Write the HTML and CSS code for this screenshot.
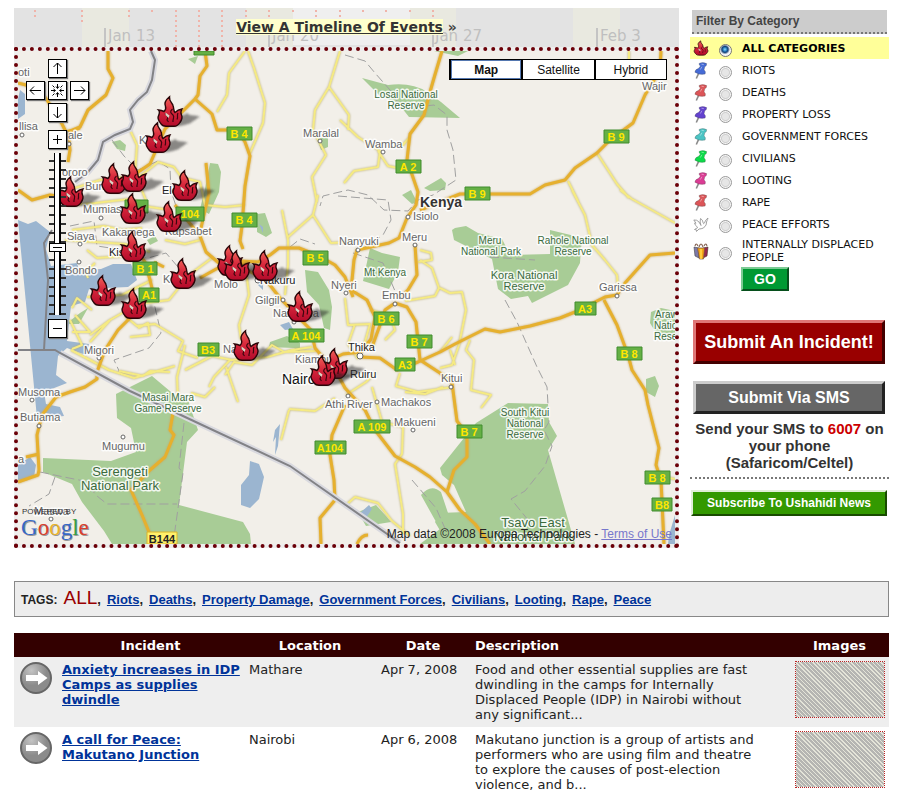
FILE: index.html
```html
<!DOCTYPE html>
<html lang="en">
<head>
<meta charset="utf-8">
<title>Ushahidi</title>
<link rel="stylesheet" href="styles.css">
</head>
<body>
<svg class="defs" aria-hidden="true">
  <defs>
    <g id="flame">
      <path d="M12.500 .8C8 4.500 7 7 8.500 10.500C9.300 12.800 8 14.500 7 15.500C5.500 14.800 4 14.300 1.500 14C3.500 16 2 18.500 1.200 20.500C.3 23 2.500 26 4.500 28.500C5.500 30 7 30.300 9 30.300H17C20 30.300 21.500 29 23 26.500C25 23.500 25.800 21.500 24.500 19C23.500 17 23.500 15.500 25 13C21.500 13.500 19.500 15 18 16.500C16.500 15 17 12.500 16 9.500C15.300 7 12 5 12.500 .8Z" fill="url(#fire)" stroke="#2a0508" stroke-width="1.400"/>
      <path d="M8 17.500C10.500 20 11.500 21 10 24L11.500 26M15.500 13C12.500 15.500 13.500 17 16 19C18 21 15.500 23 16 26M21 17C19.500 19.500 21.500 21 20 23.500" fill="none" stroke="#3c060e" stroke-width="1.200"/>
      <path d="M8.500 16.500l4 3-1 2.500-3-3Z" fill="#ddd5c5"/>
    </g>
    <linearGradient id="fire" x1="0" y1="0" x2="0" y2="1"><stop offset="0" stop-color="#ee6358"/><stop offset=".45" stop-color="#d8283c"/><stop offset="1" stop-color="#b20a2a"/></linearGradient>
    <g id="marker">
      <path d="M9 30C22 31 33 29 36 25C40 24 37 23 43 21C38 18 34 21 30 17C27 20 22 19 20 22Z" fill="#222" opacity=".5" filter="url(#soft)"/>
      <use href="#flame"/>
    </g>
    <filter id="soft"><feGaussianBlur stdDeviation="1"/></filter>
    <symbol id="pin" viewBox="0 0 16 18">
      <path d="M5.500 12L3 17.500" stroke="#8a8a8a" stroke-width="1.700"/>
      <path d="M6 1.500Q10 -.3 14 1.700Q14.200 4.300 12 5L11.200 8.500Q13.500 10 12.300 12.800Q6.500 14 1.500 10.800Q2 7.500 5.200 7L7.500 4.200Q5.700 3.300 6 1.500Z" fill="currentColor" stroke="#444" stroke-opacity=".45" stroke-width=".7"/>
      <path d="M8.500 2.300l2.500 .5M7.300 8l1.700-3" stroke="#fff" stroke-opacity=".45"/>
    </symbol>
    <symbol id="arrow" viewBox="0 0 32 32">
      <circle cx="16" cy="16" r="15" fill="url(#metal)" stroke="#666" stroke-width="2"/>
      <path d="M6 13h12V9l9.500 7-9.500 7v-4H6Z" fill="#fff"/>
    </symbol>
    <radialGradient id="metal" cx=".35" cy=".25"><stop offset="0" stop-color="#c4c4c4"/><stop offset="1" stop-color="#8b8b8b"/></radialGradient>
  </defs>
</svg>

<div class="top">
  <main class="main">
    <div class="timeline">
      <svg class="timeline-scale" viewBox="14 8 665 39" preserveAspectRatio="none" aria-hidden="true">
        <path fill="#e3e3e3" d="M14 8h665v39H14z"/>
        <path fill="#e9e9e0" d="M82 8h47v39H82zM246 8h47v39h-47zM573 8h47v39h-47z"/>
        <path fill="#efefef" d="M293 8h126v37H293z"/>
        <path fill="#e9e9e0" d="M410 8h46v39h-46z"/>
        <path fill="none" stroke="#f0b4aa" stroke-width="2" stroke-dasharray="2 3" d="M35 10v7M82 10v12M129 10v7M152 10v2M176 10v37M199 10v37M222 10v37M246 10v7M269 10v7M293 10v2M316 10v7M340 10v7M363 10v2M386 10v2M410 10v2M433 10v7"/>
        <path stroke="#c4c4c4" stroke-width="2" d="M105 28v19M269 28v19M433 28v19M597 28v19"/>
        <g class="timeline-dates"><text x="108" y="41">Jan 13</text><text x="272" y="41">Jan 20</text><text x="435" y="41">Jan 27</text><text x="600" y="41">Feb 3</text></g>
      </svg>
      <p class="timeline-title"><a href="#timeline">View A Timeline Of Events</a> »</p>
    </div>
    <div class="map">
      <svg class="map-art" viewBox="18 51 657 493" role="img" aria-label="Map of incidents in Kenya">
        <path fill="#f2efe9" d="M18 51h657v493H18z"/>
        <g fill="#a8cc96">
          <path d="M362 78L388 85Q412 82 427 92L441 102L460 118L409 117L398 103L380 96Z"/>
          <path d="M434 51h34l-10 5ZM210 163l8 1 3 8-2 20-10 22-9-5 5-20Z"/>
          <path d="M257 214l8-1 7 20-6 4-9-5ZM305 270l13 2 11 18 3 17-2 23-6-2-5-23-12-13ZM455 228l11-2 12 7 24 6 8 16 40-1 0-24 33 8-2 10-1 15-12 22-36 18-4-7-17 3-13-10-6-30-38-19-2-10Z"/>
          <path d="M370 248l12 5 18 4-2 15-9 17-26-8ZM402 195l9-5 6 12-5 2ZM424 188l17-10 5 5-1 7-15 1ZM651 312l10-4 14 3v25l-14 5-11-18ZM646 379l9-3 4 10-4 11-9-5Z"/>
          <path d="M116 394l36-18 19 16 17 8 10 30-11 12-8 63 64 17 7 12 1 10H112l-8-13-22-29-10-18-29-12v-14l68 3 25-9-5-24-14-10Z"/>
          <path d="M508 403l40 1 1 18 8 14-9 14 27 94H448l-13-22 4-9 27-1-12-27-12-10-2-7 36-45ZM421 495q10-12 20-3l11 33 15 10 13 9h-60l20-15Z"/>
          <path d="M358 512l18-7 10 11 5 6-25 4ZM80 313l8-5-9 16-13 0ZM270 342l17-6 13 7v9l-6-4-25-1ZM112 142l8-2 6 5-1 6-8-2ZM147 240l8-4 3 5-8 4ZM188 59l10-3-3 8ZM317 138l11 0 0 9-7 3Z"/>
        </g>
        <g fill="#9bb5d0">
          <path d="M18 220l10 4 8-3 14 11-4 17 5 17 26-3 2 7 22-1 12-5 18 0 6 16-9 7-22 1-8 6-9-5-4 13-14 4-4 35 22 3-3 11-19-7-9 8-2 19 11 8-23 9 2 12 14 3 4 9-9 1-9-4-9 5Z"/>
          <path d="M18 465l12-8 6 8-2 12-9 4-7-1ZM250 461l9 3 5 13-5 22-9 9-9-3v-20l8-10ZM20 90l5 4 0 20-7 5v-20ZM280 325l9-3 4 7-8 1ZM360 513l9-8 3 4-8 12ZM669 535l6-20v29h-7ZM258 285l5-2v7ZM259 224l4 3 0 6Z"/>
          <path d="M280 424l-2 22-3 9 1-18-3 5 2-12Z"/>
        </g>
        <g class="border-dash">
          <path d="M345 55l20 6 10 12 15 17 6 10 10 8 28-3 13 10 0 15 6 20 3 30-23 15-15 5-10 11-24-1-16-15-20-5-25 6-3 10"/>
          <path d="M338 196l50 4 3 20-8 15-25 17M112 140l12 16 14 14 20-9 12 8 1 22 5 15M353 253l30 10 12 28M490 257l45 3M505 300l12 22 20 45 10 20 2 35-5 8 8 16-7 20-20 25-14 8 22 27"/>
          <path d="M70 226l24-5 3 25 20 3 31 9 18-5 12 14M121 375l-7-15 35-12 12-15-7-30M184 423l-5 45 4 5-9 64M40 472l24 5 20 4 13 15 10 8h70M55 477l-6 17-20 12M412 480l24 28 11 25M290 247l10-8 15 5"/>
        </g>
        <g class="minor">
          <path d="M245 51l-16 22-2 22-10 17M248 51l6 17 11 35-2 20-13 30M340 51l-11 36-14 23-2 20 13 25-14 22 5 25M329 87l20 28-1 15M340 120l18 17 22 14-2 16-24 4-10 12M378 151l10 15 20 4M410 137l-9 10"/>
          <path d="M572 190l13 25 7 30 13 15 12 15 1 16M568 181l10 20M597 153l20 31 12 14M620 190l12 9 27 15 16 9M629 51v10"/>
          <path d="M130 130l7 15-2 28 12 30M75 188l25-8 18-2 24-3 16-13 16 5 10 14-10 12M70 205l25-2 35-4 20 8 20 3M72 230l32-4 18 4 20-2M65 240l30 2 30 2 25 8M87 250l10 8 28-2M95 263l-9 10 2 5M152 280l-30 15-35 2M92 310l-15-12-5 10M75 315l15 17-18 0M70 320l12 25-10 4"/>
          <path d="M90 335l20-15 14-8 15-8 30-4 20-25 23-17M110 320l-20 22M125 316l12 10 18-2 28 17-5 10 20 7M185 345l-8 32 1 25M175 366l-41 12-25-8-38-20M185 370l27-14 20 4 35-3 25-7 20-3M225 375l9-13 18 3 20-20 12 7 32-1M230 360l-16 17-5 10M226 367l12 35M119 371l24 5 7-5 20 1M215 387l-10 10-14-4M138 328l10-5 2 12-20 2"/>
          <path d="M180 177l20 5 5 23 20 2 20-2M282 210l6 30 0 25-3 30M318 195l-5 20-25 22M313 215l18 28 20-1M246 270l3 25-10 30 2 15M165 240l20 4 15-4"/>
          <path d="M420 250l11 3 1 7-14 2M420 260l12 8 7 20-4 8-30 5M440 288l10 5 12-1 4 18-7 35-7 20-12 3M370 310l20 5 5 15-10 10M345 298l3 27 22-1-7 25M355 324l-7 20 10 15M440 352l12-15M450 350l5 15M470 340l-4 10 8 10-3 30 20 5-10 13M400 373l-4 13 22 6 35-5M346 395l20-13 10-10M372 387l10 35 21 5-1 27-7 10 8 50 0 20M335 398l-20 13-26-2M289 410l-8 30M345 506l10-9 23 6 14 18 18 15M663 477l12 2M405 392l20 2 18-7"/>
        </g>
        <g class="major">
          <path d="M108 51v18l5 9-7 17-18 15-8 17-12 5 2 18-2 12M18 83l8 2 19 12 15 23 6 12 14-4M205 51l2 15-7 10-2 19-3 4 17 15 5 16h20l8 12 5 14-5 30-3 40-2 15 3 8M195 99l-30 30-15 35-25 17"/>
          <path d="M442 51l-8 27-4 14-6 23-14 19-3 26 11 32-2 13-9 13-8 20-10 5-32 7-3 10-3 30 16 10 8 17-4 22-10 13-18 2-17 8M661 51l-1 19-15 25-12 28-23 17-13 13-22 15-10 12-20 5-15 9h-70l-10 4-30 12"/>
          <path d="M175 205l25 31 6 16 14 12 20-3 18 1 12-7 9-7h20l20 8 16 9 10 12 8 20M206 163l3 30-8 35M247 270l19 10 14 18 19 20 12 12 4 18 15 18M200 278l18-10 30-5"/>
          <path d="M400 298l8-8 9-15-2-30M395 303l-10 7-5 15-8 22M395 303l12 4 9 15 4 38 20 13 12 10 5 38 10 13v23l-13 13-7 22M360 357l20 1 17 12 21-8 22-10 15-8 30-15 15 3 30-6 30-8 15-6 30-15 12-2 8-12 25-28 25-2M604 300l13 25 11 30 4 15 13 20 3 15 11 43-3 17 5 15 3 64"/>
          <path d="M338 375l7 13 20 22 10 20 20 26 20 11 15 10 17 15 13 18 15 14 15 20M345 405l-13 30-2 20 4 25 1 20-15 18 1 26M130 318l-12 12-13 20-8 22v7l-12 8-15 5-14 5-14 18-5 20 2 35-1 5-20 7M39 454l-13 3M173 413l-3 17 4 5-9 22-15 13-19 20 11 25 9 22M18 190l14 10 18-5 12 2M130 243l15 19 5 18 3 12M154 262l10 5M357 544q4-9 11-9"/>
        </g>
        <g fill="none">
          <path stroke="#d9d9df" stroke-width="6" d="M151 51l4 9-3 20-5 12-9 8-8 10 3 12-3 7-15 6-12 7-5 18-10 12-13 10M60 353l70 38 70 33 90 42 110 77"/>
          <path stroke="#828286" stroke-width="2" d="M151 51l4 9-3 20-5 12-9 8-8 10 3 12-3 7-15 6-12 7-5 18-10 12-13 10M52 230l-8 13 4 37-4 70M18 350h37l5 3 70 38 70 33 90 42 110 77"/>
        </g>
        <g class="town-dots"><circle cx="22" cy="135" r="2"/><circle cx="69" cy="144" r="2"/><circle cx="320" cy="141" r="2"/><circle cx="383" cy="152" r="2"/><circle cx="408" cy="217" r="2"/><circle cx="415" cy="245" r="2"/><circle cx="358" cy="250" r="2"/><circle cx="346" cy="293" r="2"/><circle cx="395" cy="304" r="2"/><circle cx="101" cy="218" r="2"/><circle cx="80" cy="244" r="2"/><circle cx="79" cy="262" r="2"/><circle cx="99" cy="358" r="2"/><circle cx="32" cy="400" r="2"/><circle cx="39" cy="426" r="2"/><circle cx="123" cy="437" r="2"/><circle cx="51" cy="519" r="2"/><circle cx="283" cy="300" r="2"/><circle cx="617" cy="296" r="2"/><circle cx="360" cy="356" r="3"/><circle cx="451" cy="387" r="2"/><circle cx="377" cy="402" r="2"/><circle cx="413" cy="430" r="2"/><circle cx="348" cy="396" r="2"/><circle cx="258" cy="280" r="3"/><circle cx="294" cy="322" r="2"/></g>
        <g class="shields">
          <path d="M227 127h25v13h-25zM604 130h25v13h-25zM396 160h25v13h-25zM465 187h25v13h-25zM232 213h25v14h-25zM176 207h28v14h-28zM125 200h23v13h-23zM303 251h25v14h-25zM133 262h24v13h-24zM139 288h20v14h-20zM289 329h35v13h-35zM198 343h21v13h-21zM374 312h25v13h-25zM407 335h25v13h-25zM395 358h20v13h-20zM575 302h21v13h-21zM617 347h25v13h-25zM354 420h36v13h-36zM457 425h25v13h-25zM315 441h31v13h-31zM645 471h25v13h-25zM652 498h20v13h-20zM194 51h20v4h-20z"/>
          <g class="shield-text"><text x="239" y="138">B 4</text><text x="616" y="141">B 9</text><text x="408" y="171">A 2</text><text x="477" y="198">B 9</text><text x="244" y="224">B 4</text><text x="190" y="218">104</text><text x="315" y="262">B 5</text><text x="145" y="273">B 1</text><text x="149" y="299">A1</text><text x="306" y="340">A 104</text><text x="208" y="354">B3</text><text x="386" y="323">B 6</text><text x="419" y="346">B 7</text><text x="405" y="369">A3</text><text x="585" y="313">A3</text><text x="629" y="358">B 8</text><text x="372" y="431">A 109</text><text x="469" y="436">B 7</text><text x="330" y="452">A104</text><text x="657" y="482">B 8</text><text x="662" y="509">B8</text></g>
          <path class="yellow-shield" d="M147 532h30v12h-30z"/><text class="yellow-text" x="162" y="543">B144</text>
        </g>
        <g class="labels">
          <text x="18" y="76">oti</text><text x="19" y="130">llisa</text><text x="68" y="139">ale</text><text x="62" y="176">ororo</text><text x="303" y="137">Maralal</text><text x="365" y="148">Wamba</text><text x="642" y="90">Wajir</text><text x="139" y="144">K</text><text x="85" y="190">Bun</text><text x="83" y="213">Mumias</text><text x="67" y="240">Siaya</text><text x="102" y="236">Kakamega</text><text x="165" y="235">Kapsabet</text><text x="65" y="274">Bondo</text><text x="163" y="283">K</text><text x="214" y="288">Molo</text><text x="255" y="304">Gilgil</text><text x="273" y="317">Naivasha</text><text x="223" y="353">Narok</text><text x="84" y="354">Migori</text><text x="18" y="396">Musoma</text><text x="20" y="421">Butiama</text><text x="102" y="450">Mugumu</text><text x="18" y="463">a</text><text x="34" y="515">Maswa</text><text x="413" y="220">Isiolo</text><text x="402" y="241">Meru</text><text x="339" y="245">Nanyuki</text><text x="331" y="289">Nyeri</text><text x="382" y="299">Embu</text><text x="599" y="291">Garissa</text><text x="295" y="363">Kiambu</text><text class="dark" x="348" y="351">Thika</text><text class="dark" x="350" y="378">Ruiru</text><text x="441" y="382">Kitui</text><text x="381" y="406">Machakos</text><text x="394" y="426">Makueni</text><text x="325" y="408">Athi River</text><text class="dark" x="260" y="284">Nakuru</text><text class="dark" x="162" y="194">Eldoret</text><text class="dark" x="109" y="256">Kisumu</text>
          <text class="city" x="282" y="384">Nairobi</text><text class="country" x="420" y="207">Kenya</text>
        </g>
        <g class="park-labels">
          <text><tspan x="406" y="98">Losai National</tspan><tspan x="406" y="109">Reserve</tspan></text>
          <text><tspan x="490" y="244">Meru</tspan><tspan x="491" y="255">National Park</tspan></text>
          <text><tspan x="573" y="244">Rahole National</tspan><tspan x="573" y="255">Reserve</tspan></text>
          <text class="mid"><tspan x="524" y="279">Kora National</tspan><tspan x="524" y="290">Reserve</tspan></text>
          <text x="385" y="276">Mt Kenya</text>
          <text class="edge"><tspan x="655" y="318">Arawale</tspan><tspan x="654" y="329">National</tspan><tspan x="654" y="340">Reserve</tspan></text>
          <text><tspan x="168" y="401">Masai Mara</tspan><tspan x="168" y="412">Game Reserve</tspan></text>
          <text><tspan x="525" y="416">South Kitui</tspan><tspan x="525" y="427">National</tspan><tspan x="525" y="438">Reserve</tspan></text>
          <text class="big"><tspan x="120" y="476">Serengeti</tspan><tspan x="120" y="490">National Park</tspan></text>
          <text class="big"><tspan x="533" y="527">Tsavo East</tspan><tspan x="533" y="541">National Park</tspan></text>
        </g>
        <g class="markers">
          <use href="#marker" x="157" y="96"/><use href="#marker" x="145" y="122"/><use href="#marker" x="101" y="163"/><use href="#marker" x="121" y="161"/><use href="#marker" x="172" y="170"/><use href="#marker" x="58" y="176"/><use href="#marker" x="120" y="193"/><use href="#marker" x="156" y="201"/><use href="#marker" x="120" y="231"/><use href="#marker" x="217" y="245"/><use href="#marker" x="224" y="250"/><use href="#marker" x="252" y="250"/><use href="#marker" x="170" y="258"/><use href="#marker" x="90" y="275"/><use href="#marker" x="121" y="288"/><use href="#marker" x="287" y="291"/><use href="#marker" x="233" y="330"/><use href="#marker" x="322" y="348"/><use href="#marker" x="310" y="355"/>
        </g>
        <text class="powered" x="22" y="514">POWERED BY</text>
        <text class="google google-shadow" x="22" y="536">Google</text>
        <text class="google" x="21" y="535"><tspan fill="#3568c8">G</tspan><tspan fill="#d7402f">o</tspan><tspan fill="#e8b32a">o</tspan><tspan fill="#3568c8">g</tspan><tspan fill="#38a048">l</tspan><tspan fill="#d7402f">e</tspan></text>
      </svg>
      <div class="pan" role="group" aria-label="Pan and zoom">
        <button class="north" aria-label="Pan up"><svg viewBox="0 0 17 17"><path d="M8.500 14V3M4.500 7l4-4 4 4"/></svg></button>
        <button class="west" aria-label="Pan left"><svg viewBox="0 0 17 17"><path d="M14 8.500H3M7 4.500l-4 4 4 4"/></svg></button>
        <button class="middle" aria-label="Reset view"><svg viewBox="0 0 17 17"><path d="M8.500 2v4M7 4.500l1.500 2L10 4.500M8.500 15v-4M7 12.500l1.500-2 1.500 2M2 8.500h4M4.500 7l2 1.500-2 1.500M15 8.500h-4M12.500 7l-2 1.500 2 1.500M3.500 3.500l2 2M13.500 3.500l-2 2M3.500 13.500l2-2M13.500 13.500l-2-2"/></svg></button>
        <button class="east" aria-label="Pan right"><svg viewBox="0 0 17 17"><path d="M3 8.500h11M10 4.500l4 4-4 4"/></svg></button>
        <button class="south" aria-label="Pan down"><svg viewBox="0 0 17 17"><path d="M8.500 3v11M4.500 10l4 4 4-4"/></svg></button>
        <button class="plus" aria-label="Zoom in"><svg viewBox="0 0 17 17"><path d="M8.500 4v9M4 8.500h9"/></svg></button>
        <input class="zoom" type="range" min="0" max="17" step="1" value="7" aria-label="Zoom level">
        <button class="minus" aria-label="Zoom out"><svg viewBox="0 0 17 17"><path d="M4 8.500h9"/></svg></button>
      </div>
      <div class="map-types"><button class="active">Map</button><button>Satellite</button><button>Hybrid</button></div>
      <p class="credit">Map data ©2008 Europa Technologies - <a href="#terms">Terms of Use</a></p>
    </div>
  </main>

  <aside class="side">
    <form class="filter">
      <h2>Filter By Category</h2>
      <label class="category all"><svg viewBox="-1 -1 28 33" preserveAspectRatio="none"><use href="#flame"/></svg><input type="radio" name="category" checked><span>ALL CATEGORIES</span></label>
      <label class="category blue"><svg><use href="#pin"/></svg><input type="radio" name="category"><span>RIOTS</span></label>
      <label class="category red"><svg><use href="#pin"/></svg><input type="radio" name="category"><span>DEATHS</span></label>
      <label class="category violet"><svg><use href="#pin"/></svg><input type="radio" name="category"><span>PROPERTY LOSS</span></label>
      <label class="category cyan"><svg><use href="#pin"/></svg><input type="radio" name="category"><span>GOVERNMENT FORCES</span></label>
      <label class="category green"><svg><use href="#pin"/></svg><input type="radio" name="category"><span>CIVILIANS</span></label>
      <label class="category pink"><svg><use href="#pin"/></svg><input type="radio" name="category"><span>LOOTING</span></label>
      <label class="category red"><svg><use href="#pin"/></svg><input type="radio" name="category"><span>RAPE</span></label>
      <label class="category"><svg viewBox="0 0 16 16"><path d="M.8 3.500Q4 3 6 5.500L8 9Q6.500 5.500 7.500 2Q9.800 3 10.200 6.500Q10.500 8 11.500 6.500Q12 3.500 15 1.500Q14.800 3 13.800 4.500Q14 9 10.500 11.500Q8 12.500 6 12.500L3.500 15L3.300 13.300L1.500 13L4.800 11Q2 9 1.500 6.500L3 6.700Z" fill="#fff" stroke="#999" stroke-width=".9"/></svg><input type="radio" name="category"><span>PEACE EFFORTS</span></label>
      <label class="category tall"><svg viewBox="0 0 16 18"><path d="M1 5l5 1v10l-4-2Z" fill="#7d79a8" stroke="#444" stroke-width=".6"/><path d="M10 6l5-1-1 9-4 2Z" fill="#96274e" stroke="#432" stroke-width=".6"/><path d="M4.500 6h7l-1 11h-4Z" fill="#f6a514" stroke="#754" stroke-width=".7"/><path d="M8 7v10" stroke="#ffd94d" stroke-width="1.500"/><path d="M2 4q1-4 3 0M6 5q2-6 4 0M11 4q2-4 3 0" fill="none" stroke="#865" stroke-width="1.200"/></svg><input type="radio" name="category"><span>INTERNALLY DISPLACED PEOPLE</span></label>
      <button class="go" type="submit">GO</button>
    </form>
    <button class="incident">Submit An Incident!</button>
    <button class="sms">Submit Via SMS</button>
    <p class="sms-note">Send your SMS to <strong>6007</strong> on your phone (Safaricom/Celtel)</p>
    <button class="subscribe">Subscribe To Ushahidi News</button>
  </aside>
</div>

<nav class="tags" aria-label="Tags">
  <span class="tags-title">TAGS:</span><span><b>ALL</b>,</span><span><a href="#riots">Riots</a>,</span><span><a href="#deaths">Deaths</a>,</span><span><a href="#property">Property Damage</a>,</span><span><a href="#government">Government Forces</a>,</span><span><a href="#civilians">Civilians</a>,</span><span><a href="#looting">Looting</a>,</span><span><a href="#rape">Rape</a>,</span><span><a href="#peace">Peace</a></span>
</nav>

<table class="incidents">
  <thead><tr><th class="col-icon"></th><th class="col-incident">Incident</th><th class="col-location">Location</th><th class="col-date">Date</th><th class="col-text">Description</th><th class="col-image">Images</th></tr></thead>
  <tbody>
    <tr><td><svg class="arrow"><use href="#arrow"/></svg></td><td class="name"><a href="#anxiety">Anxiety increases in IDP Camps as supplies dwindle</a></td><td>Mathare</td><td>Apr 7, 2008</td><td>Food and other essential supplies are fast<br>dwindling in the camps for Internally<br>Displaced People (IDP) in Nairobi without<br>any significant...</td><td class="image"><div class="thumb"></div></td></tr>
    <tr><td><svg class="arrow"><use href="#arrow"/></svg></td><td class="name"><a href="#peace-call">A call for Peace: Makutano Junction</a></td><td>Nairobi</td><td>Apr 6, 2008</td><td>Makutano junction is a group of artists and<br>performers who are using film and theatre<br>to explore the causes of post-election<br>violence, and b...</td><td class="image"><div class="thumb"></div></td></tr>
  </tbody>
</table>
</body>
</html>
```
FILE: styles.css
```css
* { box-sizing: border-box; }
body { margin: 0; padding: 8px 11px 0 14px; background: #fff; color: #222; font: 13px/15px "DejaVu Sans", sans-serif; }
p, h2 { margin: 0; }
a { color: #039; }
button { font-family: "Liberation Sans", sans-serif; cursor: pointer; }
.defs { position: absolute; width: 0; height: 0; }

.top { display: flex; gap: 11px; align-items: flex-start; }
.main { flex: 1; min-width: 0; }
.timeline { position: relative; height: 39px; display: flex; justify-content: center; align-items: center; }
.timeline-scale { position: absolute; inset: 0; width: 100%; height: 100%; }
.timeline-dates { font: 15px "DejaVu Sans", sans-serif; fill: #bfbfbf; }
.timeline-title { position: relative; font-size: 14px; line-height: 17px; font-weight: bold; color: #444; }
.timeline-title a { color: #333; background: #ffc; }

.map { position: relative; border: 4px dotted #6b0008; background: #eee; }
.map-art { display: block; width: 100%; height: auto; font-family: "Liberation Sans", sans-serif; }
.border-dash { fill: none; stroke: #a0a0a0; stroke-width: 1; stroke-dasharray: 9 4; }
.minor { fill: none; stroke: #f5ea83; stroke-width: 2; stroke-linejoin: round; filter: drop-shadow(0 0 1px #b9ad70); }
.major { fill: none; stroke: #e6b02e; stroke-width: 3; stroke-linejoin: round; filter: drop-shadow(0 0 1px #c8a860); }
.town-dots { fill: #fff; stroke: #666; stroke-width: 1; }
.shields > path { fill: #65b045; stroke: #408c2e; }
.shield-text { fill: #ffe600; font-size: 11px; font-weight: bold; text-anchor: middle; }
.shields .yellow-shield { fill: #fff06b; stroke: #d8b42c; }
.yellow-text { font-size: 11px; font-weight: bold; text-anchor: middle; fill: #222; }
.labels text, .park-labels text { paint-order: stroke; stroke: #fff; stroke-width: 3px; stroke-linejoin: round; stroke-opacity: .85; font-size: 11px; fill: #666; }
.labels .dark { fill: #222; }
.labels .city { font-size: 14px; fill: #111; }
.labels .country { font-size: 14px; font-weight: bold; fill: #333; }
.park-labels text { font-size: 10px; fill: #3b6b3d; text-anchor: middle; }
.park-labels .mid { font-size: 11px; }
.park-labels .big { font-size: 13px; }
.park-labels .edge { text-anchor: start; }
.powered { font-size: 8px; fill: #333; }
.google { font: 23px "Liberation Serif", serif; }
.google-shadow { fill: #999; }

.pan { position: absolute; left: 8px; top: 8px; display: grid; grid-template-columns: repeat(3, 18px); grid-template-rows: repeat(3, 18px); gap: 4px; justify-items: center; }
.pan button { width: 19px; height: 19px; padding: 0; border: 1px solid #000; background: #fff; box-shadow: 1px 1px 1px #777; }
.pan button svg { display: block; width: 17px; height: 17px; fill: none; stroke: #000; }
.north, .south, .middle, .plus, .zoom, .minus { grid-column: 2; }
.west { grid-column: 1; grid-row: 2; }
.middle, .east { grid-row: 2; }
.south { grid-row: 3; }
.plus { margin-top: 5px; }
.zoom { appearance: none; writing-mode: vertical-lr; direction: rtl; width: 17px; height: 162px; margin: 0; background: linear-gradient(90deg, transparent 5px, #000 5px 6px, #fff 6px 10px, #000 10px 12px, transparent 12px), repeating-linear-gradient(180deg, transparent 0 7px, #333 7px 9px); }
.zoom::-webkit-slider-thumb { appearance: none; width: 17px; height: 9px; border: 1px solid #000; background: linear-gradient(#000, #000) center / 9px 1px no-repeat #fff; }
.map-types { position: absolute; right: 8px; top: 8px; display: flex; width: 218px; border: 1px solid #000; }
.map-types button { flex: 1; height: 19px; padding: 0; border: 0; border-left: 2px solid #000; background: #fff; font-size: 12px; line-height: 18px; color: #111; }
.map-types button:first-child { border-left: 1px solid #000; }
.map-types .active { font-weight: bold; box-shadow: inset 0 0 0 1px #5578b0; }
.credit { position: absolute; right: 3px; bottom: 2px; font: 12px/15px "Liberation Sans", sans-serif; color: #222; }
.credit a { color: #77c; }

.side { flex: 0 0 199px; padding-top: 2px; }
.filter h2 { margin: 0 2px 3px; padding: 4px 4px; border-bottom: 2px dotted #777; background: #ccc; color: #444; font: bold 12px/14px "Liberation Sans", sans-serif; }
.category { display: grid; grid-template-columns: 16px 13px 1fr; column-gap: 10px; align-items: center; min-height: 22px; padding-left: 3px; font-size: 11px; line-height: 13px; color: #111; }
.category svg { width: 16px; height: 17px; color: var(--pin); }
.category input { appearance: none; width: 13px; height: 13px; margin: 5px 0 0; border: 1px solid #999; border-radius: 50%; background: radial-gradient(circle, #e6e6e6 0 3px, #cfcfcf 4px, #f5f5f5 5px); }
.category input:checked { background: radial-gradient(circle at 45% 40%, #8fe0ff 0, #2478b8 2px, #123f75 3px, #f5f5f5 5px); border-color: #777; }
.all { background: #ff9; font-weight: bold; color: #000; }
.all svg { height: 16px; }
.blue { --pin: #456bd6; }
.red { --pin: #dc5558; }
.violet { --pin: #6342cf; }
.cyan { --pin: #4bc4c4; }
.green { --pin: #0bdb48; }
.pink { --pin: #db3c94; }
.tall { min-height: 31px; }
.tall svg { height: 18px; }
.go { display: block; width: 48px; height: 24px; margin: 1px 0 0 51px; padding: 0; border: 2px solid; border-color: #7ccb94 #064f1c #064f1c #7ccb94; background: #093; color: #fff; font-size: 14px; font-weight: bold; }
.incident, .sms { display: block; width: 192px; margin-left: 3px; padding: 0; border: 3px solid; color: #fff; font-weight: bold; }
.incident { height: 44px; margin-top: 29px; border-color: #df7777 #400 #400 #df7777; background: #900; font-size: 18px; }
.sms { height: 33px; margin-top: 17px; border-color: #ccc #222 #222 #ccc; background: #666; font-size: 16px; }
.sms-note { padding: 6px 0; border-bottom: 2px dotted #777; font: bold 15px/17px "Liberation Sans", sans-serif; color: #333; text-align: center; }
.sms-note strong { color: #c00; }
.subscribe { display: block; width: 196px; height: 26px; margin: 11px 0 0 1px; padding: 0; border: 2px solid; border-color: #e0eed8 #194b00 #194b00 #e0eed8; background: #390; color: #fff; font-size: 12px; font-weight: bold; }

.tags { display: flex; flex-wrap: wrap; align-items: baseline; gap: 6px; min-height: 35px; margin-top: 33px; padding: 6px; border: 1px solid #888; background: #ededed; font: bold 13px/20px "Liberation Sans", sans-serif; }
.tags-title { font-size: 12px; }
.tags b { color: #900; font-size: 19px; line-height: 19px; font-weight: normal; }

.incidents { width: 100%; margin-top: 16px; border-collapse: collapse; table-layout: fixed; }
.incidents th { height: 24px; padding: 0 5px; background: #300; color: #fff; }
.col-icon { width: 43px; }
.col-incident { width: 187px; }
.col-location { width: 132px; }
.col-date { width: 94px; }
.col-image { width: 99px; }
.incidents .col-text { text-align: left; }
.incidents td { padding: 5px; vertical-align: top; }
.incidents tbody tr:nth-child(odd) { background: #eee; }
.incidents td a { font-weight: bold; }
.incidents .name { padding-right: 0; }
.incidents .image { padding: 4px 4px 4px 5px; }
.arrow { display: block; width: 32px; height: 32px; margin-left: 1px; }
.thumb { height: 57px; border: 1px dotted #b22; background: repeating-linear-gradient(45deg, #b5b5b2 0 2px, #e4e4d8 2px 3px) padding-box; }
```
